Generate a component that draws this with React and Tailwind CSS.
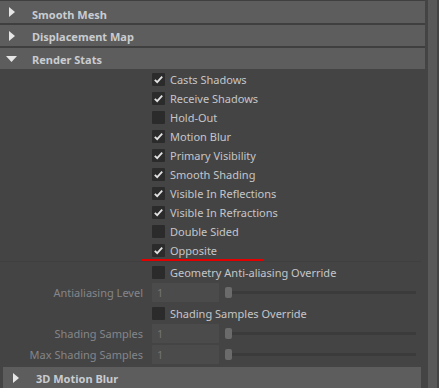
const checks = [
  ["Casts Shadows", true],
  ["Receive Shadows", true],
  ["Hold-Out", false],
  ["Motion Blur", true],
  ["Primary Visibility", true],
  ["Smooth Shading", true],
  ["Visible In Reflections", true],
  ["Visible In Refractions", true],
  ["Double Sided", false],
  ["Opposite", true],
];

const ArrowRight = () => (
  <svg width="6" height="10" viewBox="0 0 6 10" className="shrink-0">
    <polygon points="0,0 6,5 0,10" fill="#e6e6e6" />
  </svg>
);

const ArrowDown = () => (
  <svg width="11" height="6" viewBox="0 0 11 6" className="shrink-0">
    <polygon points="0,0 11,0 5.5,6" fill="#e6e6e6" />
  </svg>
);

const Header = ({ title, open, h = "h-[21px]", pt = "pt-[2px]" }) => (
  <div className={`${h} bg-[#5d5d5d] flex items-center`}>
    <div className={open ? "w-[32px] pl-[6px] flex" : "w-[32px] pl-[9px] flex"}>
      {open ? <ArrowDown /> : <ArrowRight />}
    </div>
    <span className={`${pt} font-bold text-[#c9ccd0]`}>{title}</span>
  </div>
);

const Box = ({ checked }) => (
  <div className="w-[13px] h-[13px] bg-[#2b2b2b] rounded-[1px] flex items-center justify-center shrink-0">
    {checked && (
      <svg width="13" height="13" viewBox="0 0 13 13">
        <polyline points="2.8,6.8 5.2,9.2 10.2,3.6" fill="none" stroke="#e2e2e2" strokeWidth="1.8" />
      </svg>
    )}
  </div>
);

const CheckRow = ({ label, checked, h = "h-[19px]" }) => (
  <div className={`${h} flex items-center`}>
    <div className="w-[152px] shrink-0" />
    <Box checked={checked} />
    <span className="ml-[5px] text-[#c4c6c9]">{label}</span>
  </div>
);

const SliderRow = ({ label }) => (
  <div className="h-[21px] flex items-center">
    <div className="w-[143px] shrink-0 text-right text-[#84868a]">{label}</div>
    <div className="ml-[9px] w-[67px] h-[19px] bg-[#4b4b4b] flex items-center pl-[5px] text-[#747474] rounded-[1px]">1</div>
    <div className="ml-[6px] w-[191px] relative flex items-center h-[11px]">
      <div className="w-full h-[3px] bg-[#3b3b3b]" />
      <div className="absolute left-0 top-0 w-[7px] h-[11px] bg-[#6b6b6b] rounded-[2px]" />
    </div>
  </div>
);

export default function App() {
  return (
    <div className="w-[439px] h-[388px] bg-[#444444] flex overflow-hidden font-['Noto_Sans',sans-serif] text-[11px] leading-none">
      <div className="w-[425px] flex flex-col">
        <div className="pt-[1px] flex flex-col gap-[2px] bg-[#3f3f3f]">
          <Header title="Smooth Mesh" h="h-[22px]" pt="pt-[5px]" />
          <Header title="Displacement Map" />
          <Header title="Render Stats" open />
        </div>
        <div className="pt-[1px]">
          {checks.map(([label, checked]) =>
            label === "Opposite" ? (
              <div key={label} className="relative">
                <CheckRow label={label} checked={checked} />
                <div className="absolute left-[142px] top-[18px] w-[121px] h-[2px] bg-[#e50000]" />
              </div>
            ) : (
              <CheckRow key={label} label={label} checked={checked} />
            )
          )}
        </div>
        <div className="mt-[1px] border-t border-[#3f3f3f] w-[421px]">
          <CheckRow label="Geometry Anti-aliasing Override" checked={false} h="h-[20px]" />
          <SliderRow label="Antialiasing Level" />
          <CheckRow label="Shading Samples Override" checked={false} h="h-[20px]" />
          <SliderRow label="Shading Samples" />
          <SliderRow label="Max Shading Samples" />
        </div>
        <div className="mt-[2px] ml-[3px] w-[418px] h-[21px] bg-[#5d5d5d] flex items-center">
          <div className="w-[33px] pl-[10px] flex">
            <ArrowRight />
          </div>
          <span className="pt-[2px] font-bold text-[#c9ccd0]">3D Motion Blur</span>
        </div>
      </div>
      <div className="ml-[3px] w-[9px] bg-[#595959]" />
    </div>
  );
}
